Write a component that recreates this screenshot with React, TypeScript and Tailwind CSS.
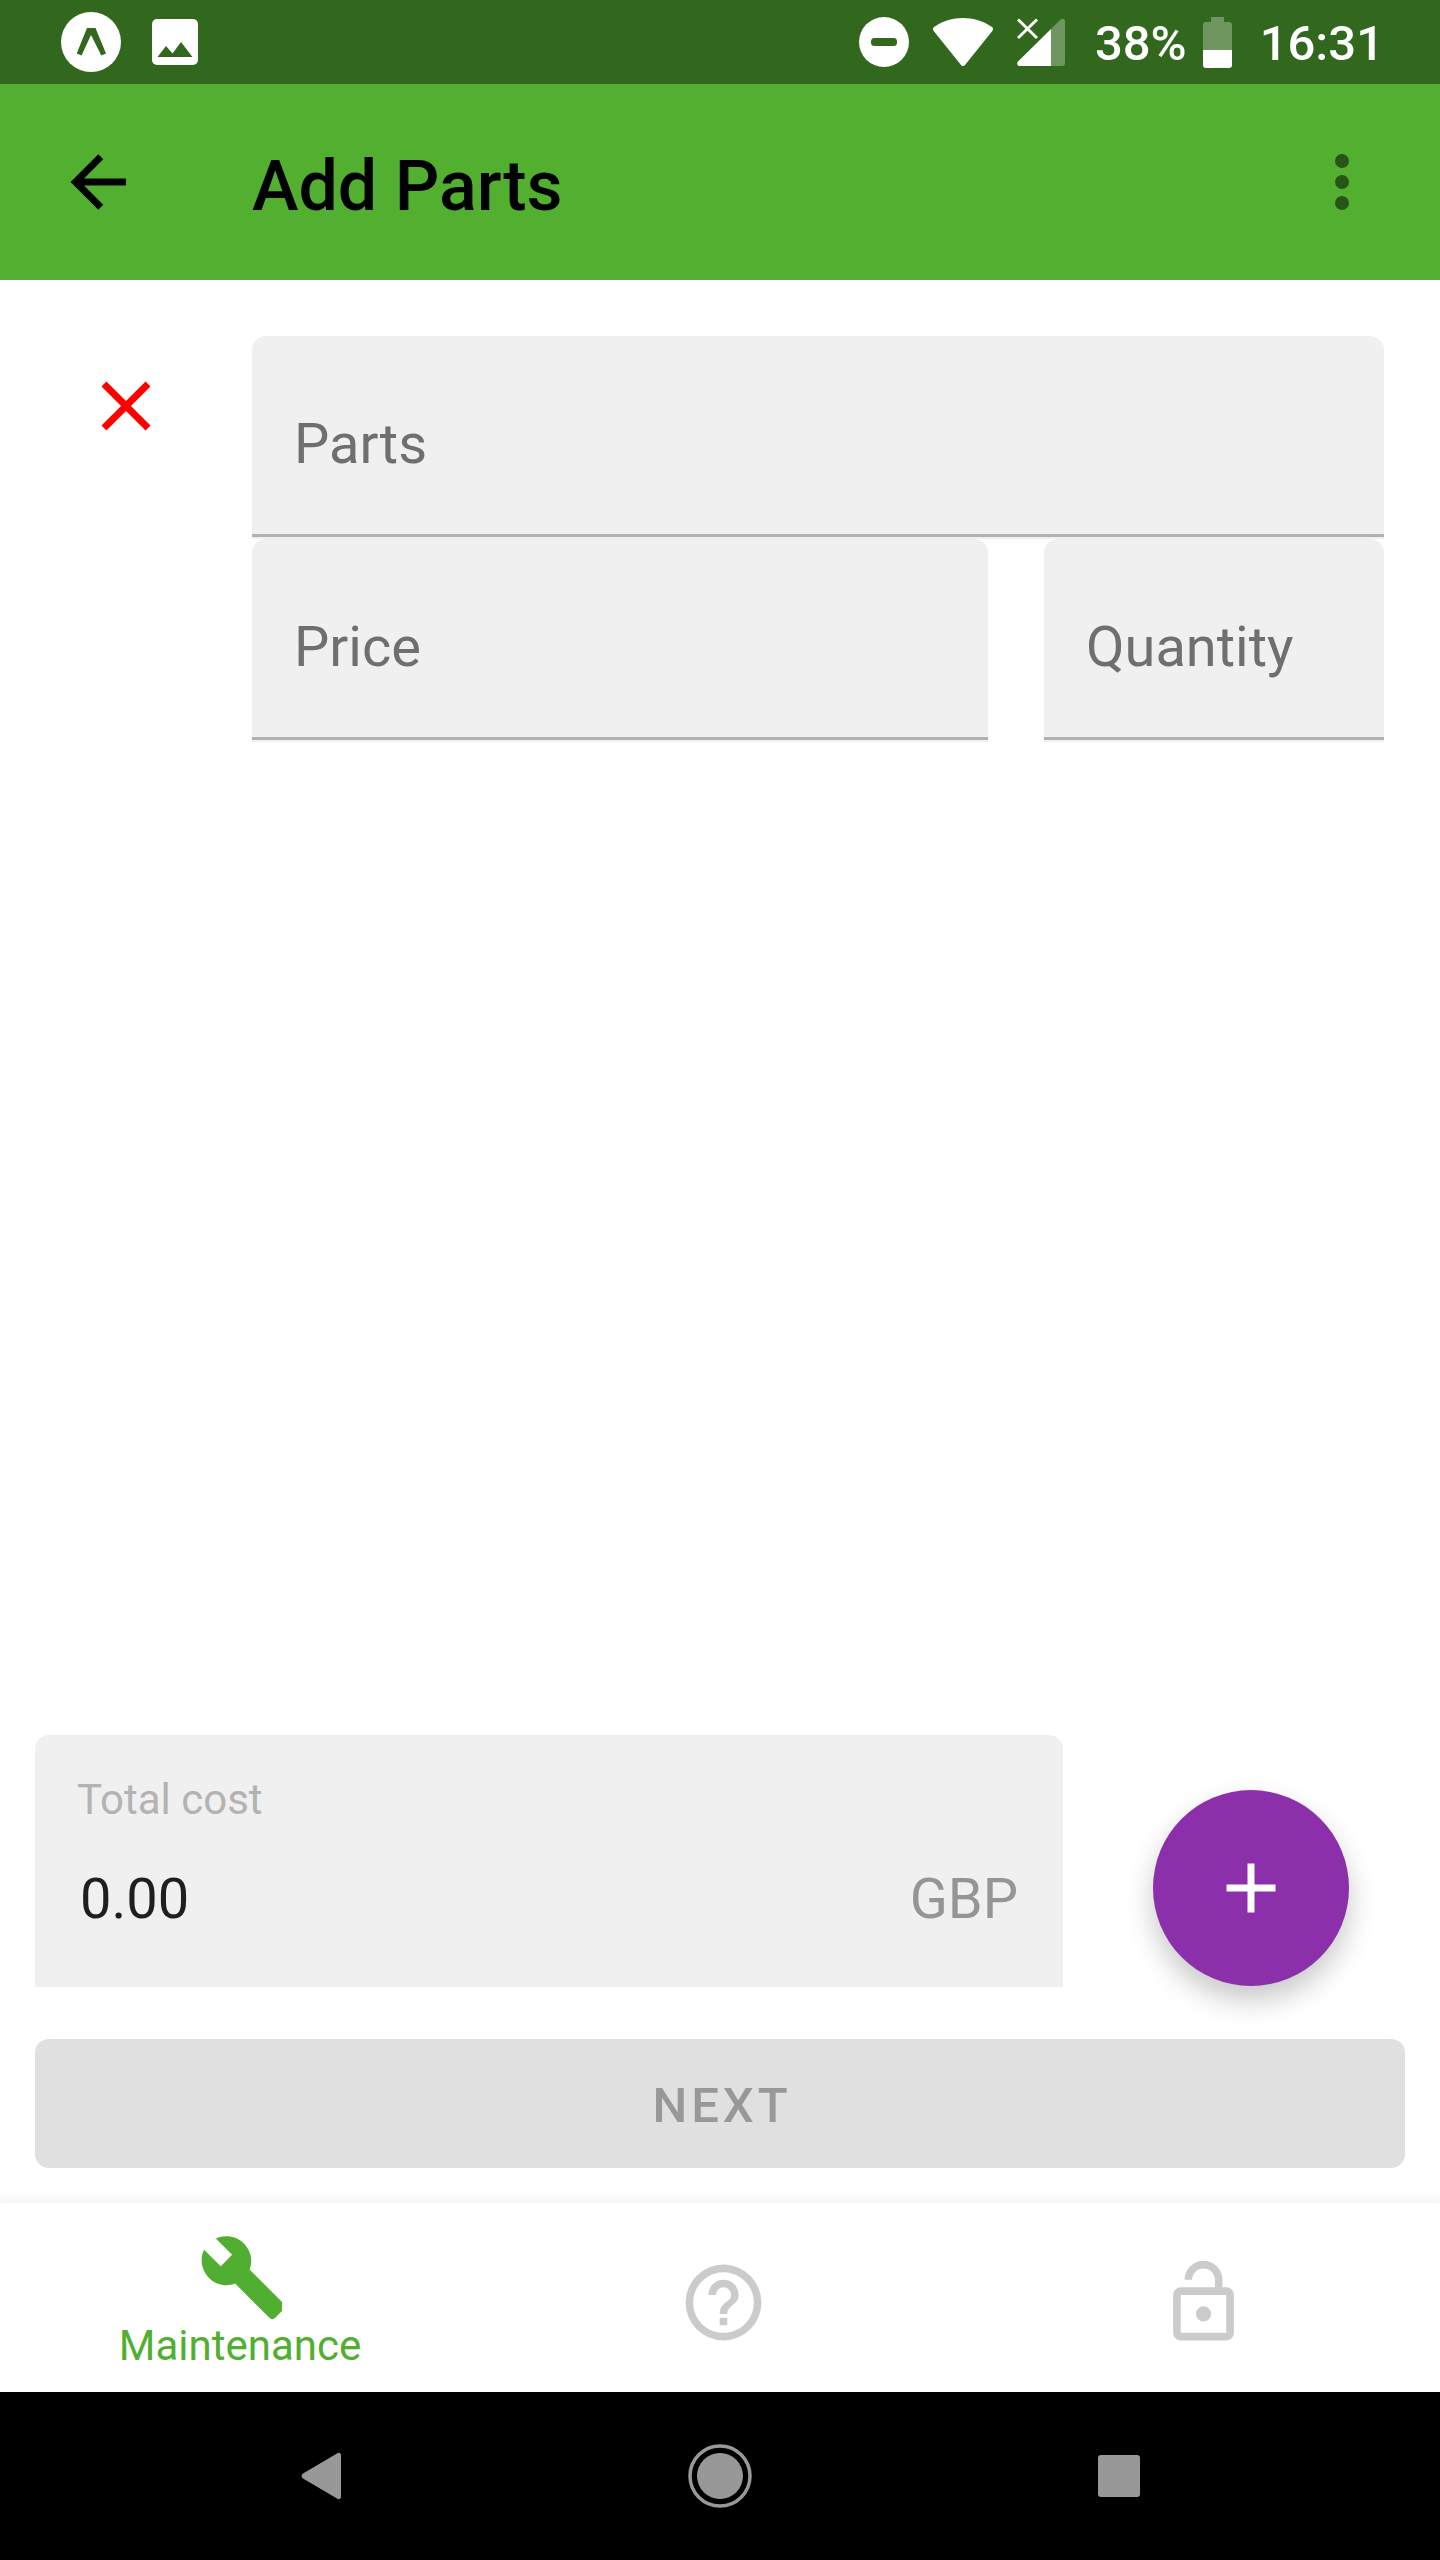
import React, { useState } from "react";

const paths = {
  back: "M20,11V13H8L13.5,18.5L12.08,19.92L4.16,12L12.08,4.08L13.5,5.5L8,11H20Z",
  dots: "M12,16A2,2 0 0,1 14,18A2,2 0 0,1 12,20A2,2 0 0,1 10,18A2,2 0 0,1 12,16M12,10A2,2 0 0,1 14,12A2,2 0 0,1 12,14A2,2 0 0,1 10,12A2,2 0 0,1 12,10M12,4A2,2 0 0,1 14,6A2,2 0 0,1 12,8A2,2 0 0,1 10,6A2,2 0 0,1 12,4Z",
  close:
    "M19,6.41L17.59,5L12,10.59L6.41,5L5,6.41L10.59,12L5,17.59L6.41,19L12,13.41L17.59,19L19,17.59L13.41,12L19,6.41Z",
  plus: "M19,13H13V19H11V13H5V11H11V5H13V11H19V13Z",
  wrench:
    "M22.7,19L13.6,9.9C14.5,7.6 14,4.9 12.1,3C10.1,1 7.1,0.6 4.7,1.7L9,6L6,9L1.6,4.7C0.4,7.1 0.9,10.1 2.9,12.1C4.8,14 7.5,14.5 9.8,13.6L18.9,22.7C19.3,23.1 19.9,23.1 20.3,22.7L22.6,20.4C23.1,20 23.1,19.3 22.7,19Z",
  help: "M11,18H13V16H11V18M12,2A10,10 0 0,0 2,12A10,10 0 0,0 12,22A10,10 0 0,0 22,12A10,10 0 0,0 12,2M12,20C7.59,20 4,16.41 4,12C4,7.59 7.59,4 12,4C16.41,4 20,7.59 20,12C20,16.41 16.41,20 12,20M12,6A4,4 0 0,0 8,10H10A2,2 0 0,1 12,8A2,2 0 0,1 14,10C14,12 11,11.75 11,15H13C13,12.75 16,12.5 16,10A4,4 0 0,0 12,6Z",
  lock: "M18,20V10H6V20H18M18,8A2,2 0 0,1 20,10V20A2,2 0 0,1 18,22H6C4.89,22 4,21.1 4,20V10A2,2 0 0,1 6,8H15V6A3,3 0 0,0 12,3A3,3 0 0,0 9,6H7A5,5 0 0,1 12,1A5,5 0 0,1 17,6V8H18M12,17A2,2 0 0,1 10,15A2,2 0 0,1 12,13A2,2 0 0,1 14,15A2,2 0 0,1 12,17Z",
};

function Icon({ d }: { d: string }) {
  return (
    <svg viewBox="0 0 24 24" className="size-21 shrink-0 fill-current" aria-hidden="true">
      <path d={d} />
    </svg>
  );
}

// Tab glyphs are slightly wider than their box, so the right edge is clipped.
function TabIcon({ d }: { d: string }) {
  return (
    <svg viewBox="0 0 22.15 24" className="h-[91px] w-21 shrink-0 fill-current" aria-hidden="true">
      <path d={d} />
    </svg>
  );
}

function StatusBar() {
  return (
    <div className="flex h-21 items-center justify-between bg-[#31681d] pr-14 pl-[61px] text-white">
      <div className="flex items-center gap-[31px]">
        <svg viewBox="0 0 60 60" className="size-[60px]" aria-hidden="true">
          <circle cx="30" cy="30" r="30" fill="#fff" />
          <path
            d="M26 16h8.500l10.500 25.500-4.700 2L30 23 20.500 43.500 15.700 41.500z"
            fill="#31681d"
          />
        </svg>
        <svg viewBox="0 0 46 46" className="size-[46px]" aria-hidden="true">
          <rect width="46" height="46" rx="5" fill="#fff" />
          <path d="M5.500 38 14 27l6.500 7.500L29 23l11.500 15z" fill="#31681d" />
        </svg>
      </div>
      <div className="flex items-center">
        <svg viewBox="0 0 50 50" className="size-[50px]" aria-hidden="true">
          <circle cx="25" cy="25" r="25" fill="#fff" />
          <rect x="12" y="21" width="26" height="8" rx="3.500" fill="#31681d" />
        </svg>
        <svg viewBox="0 0 60 48" className="ml-6 h-12 w-[60px]" aria-hidden="true">
          <path
            d="M1 9C18-3 42-3 59 9c1.200 1 1.300 2.500.500 3.700L32 47c-1 1.300-3 1.300-4 0L.5 12.700C-.3 11.500-.2 10 1 9z"
            fill="#fff"
          />
        </svg>
        <svg viewBox="0 0 48 48" className="ml-6 size-12" aria-hidden="true">
          <path d="M34 11 43.500 1.500C45 0 48 .5 48 3v42a3 3 0 0 1-3 3H34z" fill="#fff" opacity=".3" />
          <path d="M34 11v37H2.500C0 48-.5 45 1 43.500z" fill="#fff" />
          <path d="M1 1.500 20 20M20 1.500 1 20" stroke="#fff" strokeWidth="3" />
        </svg>
        <span className="ml-[30px] pt-1 text-[49px] leading-[56px] font-medium">38%</span>
        <svg viewBox="0 0 29 51" className="ml-4 h-[51px] w-[29px]" aria-hidden="true">
          <path d="M8 0h13v5h5a3 3 0 0 1 3 3v25H0V8a3 3 0 0 1 3-3h5z" fill="#fff" opacity=".3" />
          <path d="M0 33h29v15a3 3 0 0 1-3 3H3a3 3 0 0 1-3-3z" fill="#fff" />
        </svg>
        <span className="ml-7 pt-1 text-[49px] leading-[56px] font-medium">16:31</span>
      </div>
    </div>
  );
}

function FilledInput({ label, className }: { label: string; className: string }) {
  return (
    <div className={`min-w-0 rounded-t-[14px] bg-[#f0f0f0] pb-[2px] ${className}`}>
      <input
        aria-label={label}
        placeholder={label}
        className="h-[201px] w-full border-b-3 border-[#b1b1b1] bg-transparent px-[42px] pt-[18px] text-[56px] text-[#1f1f1f] outline-none placeholder:text-[#6f6f6f] placeholder:opacity-100"
      />
    </div>
  );
}

export default function App() {
  const [tab, setTab] = useState("Maintenance");
  const tabs = [
    { name: "Maintenance", d: paths.wrench },
    { name: "Help", d: paths.help },
    { name: "Account", d: paths.lock },
  ];

  return (
    <div className="flex min-h-screen flex-col bg-white font-[Roboto,sans-serif]">
      <StatusBar />
      <header className="flex h-49 items-center bg-[#52af30] px-14 text-black">
        <button aria-label="Back" className="mr-28">
          <Icon d={paths.back} />
        </button>
        <h1 className="grow pt-2 text-[70px] leading-[84px] font-medium">Add Parts</h1>
        <button aria-label="More options" className="text-[#275517]">
          <Icon d={paths.dots} />
        </button>
      </header>

      <main className="flex grow flex-col">
        <section className="flex items-start pt-14 pr-14 pl-21">
          <button aria-label="Remove part" className="mt-7 mr-21 text-[#ff0000]">
            <Icon d={paths.close} />
          </button>
          <div className="min-w-0 grow">
            <FilledInput label="Parts" className="" />
            <div className="flex gap-14">
              <FilledInput label="Price" className="grow" />
              <FilledInput label="Quantity" className="w-[340px] shrink-0" />
            </div>
          </div>
        </section>

        <section className="mt-auto flex items-end pr-[91px] pl-[35px]">
          <div className="mr-[90px] min-w-0 grow rounded-t-[14px] bg-[#f0f0f0] px-[42px] pt-[37px] pb-[53px]">
            <label htmlFor="total" className="block text-[42px] leading-[56px] text-[#b3b3b3]">
              Total cost
            </label>
            <div className="flex items-center px-[3px] pt-9 text-[56px] leading-[70px]">
              <input
                id="total"
                readOnly
                value="0.00"
                className="h-[70px] min-w-0 grow bg-transparent text-[#1f1f1f] outline-none"
              />
              <span className="text-[#959595]">GBP</span>
            </div>
          </div>
          <button
            aria-label="Add part"
            className="mb-px flex size-49 shrink-0 items-center justify-center rounded-full bg-[#8c2fab] text-white shadow-[0_14px_28px_rgba(0,0,0,0.22)]"
          >
            <Icon d={paths.plus} />
          </button>
        </section>

        <div className="px-[35px] pt-[52px] pb-[35px]">
          <button
            disabled
            className="h-[129px] w-full rounded-[14px] bg-[#e0e0e0] pt-1 pl-1 text-[49px] font-medium tracking-[4px] text-[#989898]"
          >
            NEXT
          </button>
        </div>
      </main>

      <nav className="grid h-[189px] grid-cols-3 bg-white shadow-[0_0_12px_2px_rgba(0,0,0,0.07)]">
        {tabs.map(({ name, d }) => (
          <button
            key={name}
            aria-label={name}
            onClick={() => setTab(name)}
            className={`flex flex-col items-center ${
              tab === name ? "justify-start pt-[29px] text-[#50af30]" : "justify-center pt-[10px] text-[#cbcbcb]"
            }`}
          >
            <TabIcon d={d} />
            {tab === name && <span className="text-[42px] leading-[46px]">{name}</span>}
          </button>
        ))}
      </nav>

      <div className="flex h-42 items-center justify-center gap-[315px] bg-black text-[#989898]">
        <button aria-label="System back">
          <svg viewBox="0 0 84 84" className="size-21 fill-current" aria-hidden="true">
            <path d="M58 19.500c2-1.500 4-.5 4 2v41c0 2.500-2 3.500-4 2L24 44.500c-2-1.500-2-3.500 0-5z" />
          </svg>
        </button>
        <button aria-label="Home">
          <svg viewBox="0 0 84 84" className="size-21 fill-current" aria-hidden="true">
            <circle cx="42" cy="42" r="23" />
            <circle cx="42" cy="42" r="30" fill="none" stroke="currentColor" strokeWidth="3.500" />
          </svg>
        </button>
        <button aria-label="Recent apps">
          <svg viewBox="0 0 84 84" className="size-21 fill-current" aria-hidden="true">
            <rect x="21" y="21" width="42" height="42" rx="3" />
          </svg>
        </button>
      </div>
    </div>
  );
}
